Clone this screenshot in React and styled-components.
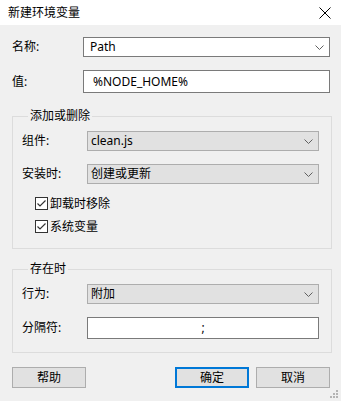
import React from 'react'
import styled, { createGlobalStyle } from 'styled-components';

const GlobalStyle = createGlobalStyle`
  html, body { margin: 0; padding: 0; background: #f0f0f0; }
`;

const Dialog = styled.div`
  width: 341px;
  height: 401px;
  background: #f0f0f0;
  position: relative;
  display: flex;
  flex-direction: column;
  font-family: "Noto Sans", "Noto Sans CJK SC", sans-serif;
  font-size: 12px;
  color: #000;
  overflow: hidden;
`;

const TitleBar = styled.div`
  height: 25px;
  background: #fff;
  display: flex;
  align-items: center;
  justify-content: space-between;
  padding: 0 10px 0 8px;
  box-sizing: border-box;
  line-height: 14px;
`;

const Content = styled.div`
  padding: 12px 0 0 12px;
  display: flex;
  flex-direction: column;
`;

const Row = styled.div`
  display: flex;
  align-items: center;
  height: ${p => p.$h || 20}px;
  margin-top: ${p => p.$mt || 0}px;
  width: ${p => p.$w || 318}px;
`;

const Label = styled.div`
  width: ${p => p.$w}px;
  flex: none;
  line-height: 14px;
`;

const Combo = styled.div`
  flex: 1;
  height: 100%;
  box-sizing: border-box;
  border: 1px solid ${p => (p.$gray ? '#adadad' : '#7a7a7a')};
  background: ${p => (p.$gray ? '#e1e1e1' : '#fff')};
  display: flex;
  align-items: center;
  justify-content: space-between;
  padding: 0 5px 0 ${p => (p.$gray ? 3 : 6)}px;
  line-height: 14px;
`;

const TextBox = styled.div`
  flex: 1;
  height: 100%;
  box-sizing: border-box;
  border: 1px solid #7a7a7a;
  background: #fff;
  display: flex;
  align-items: center;
  justify-content: ${p => (p.$center ? 'center' : 'flex-start')};
  padding-left: ${p => (p.$center ? 0 : 9)}px;
  line-height: 14px;
`;

const Group = styled.fieldset`
  margin: ${p => p.$mt}px 0 0 0;
  width: 320px;
  box-sizing: border-box;
  min-width: 0;
  border: 1px solid #dcdcdc;
  padding: 8px 12px ${p => p.$pb}px 9px;
  display: flex;
  flex-direction: column;
`;

const Legend = styled.legend`
  padding: 0 2px;
  margin-left: 6px;
  line-height: 14px;
`;

const Check = styled.label`
  display: flex;
  align-items: center;
  gap: 2px;
  height: 13px;
  margin: ${p => p.$mt}px 0 0 13px;
  line-height: 14px;
`;

const Buttons = styled.div`
  display: flex;
  margin-top: 14px;
  width: 318px;
`;

const Button = styled.button`
  width: 74px;
  height: 21px;
  box-sizing: border-box;
  margin: 0;
  margin-left: ${p => p.$ml || 0}px;
  padding: 0;
  font-family: inherit;
  font-size: 12px;
  line-height: 14px;
  color: #000;
  background: #e1e1e1;
  border: ${p => (p.$default ? '2px solid #0078d7' : '1px solid #adadad')};
`;

const Grip = styled.svg`
  position: absolute;
  right: 2px;
  bottom: 2px;
`;

const Chevron = () => (
  <svg width="9" height="5" viewBox="0 0 9 5">
    <polyline points="0.5,0.5 4.5,4.5 8.5,0.5" fill="none" stroke="#606060" strokeWidth="1" />
  </svg>
);

const Box = () => (
  <svg width="13" height="13" viewBox="0 0 13 13">
    <rect x="0.5" y="0.5" width="12" height="12" fill="#fff" stroke="#333" />
    <polyline points="2.5,6.5 5,9 10.5,3.5" fill="none" stroke="#333" strokeWidth="1.2" />
  </svg>
);

export default function App() {
  return (
    <Dialog>
      <GlobalStyle />
      <TitleBar>
        <span>新建环境变量</span>
        <svg width="12" height="12" viewBox="0 0 12 12">
          <path d="M0.5 0.5 L11.5 11.5 M11.5 0.5 L0.5 11.5" stroke="#000" strokeWidth="1" />
        </svg>
      </TitleBar>
      <Content>
        <Row $h={20}>
          <Label $w={71}>名称:</Label>
          <Combo>
            <span>Path</span>
            <Chevron />
          </Combo>
        </Row>
        <Row $h={23} $mt={13}>
          <Label $w={71}>值:</Label>
          <TextBox>%NODE_HOME%</TextBox>
        </Row>

        <Group $mt={16} $pb={15}>
          <Legend>添加或删除</Legend>
          <Row $h={20} $w={232 + 65}>
            <Label $w={65}>组件:</Label>
            <Combo $gray>
              <span>clean.js</span>
              <Chevron />
            </Combo>
          </Row>
          <Row $h={20} $mt={13} $w={232 + 65}>
            <Label $w={65}>安装时:</Label>
            <Combo $gray>
              <span>创建或更新</span>
              <Chevron />
            </Combo>
          </Row>
          <Check $mt={13}>
            <Box />
            <span>卸载时移除</span>
          </Check>
          <Check $mt={10}>
            <Box />
            <span>系统变量</span>
          </Check>
        </Group>

        <Group $mt={13} $pb={13}>
          <Legend>存在时</Legend>
          <Row $h={20} $w={232 + 65}>
            <Label $w={65}>行为:</Label>
            <Combo $gray>
              <span>附加</span>
              <Chevron />
            </Combo>
          </Row>
          <Row $h={22} $mt={13} $w={232 + 65}>
            <Label $w={65}>分隔符:</Label>
            <TextBox $center>;</TextBox>
          </Row>
        </Group>

        <Buttons>
          <Button>帮助</Button>
          <Button $default $ml={89}>确定</Button>
          <Button $ml={7}>取消</Button>
        </Buttons>
      </Content>
      <Grip width="9" height="9" viewBox="0 0 9 9">
        <g fill="#b4b4b4">
          <rect x="6" y="0" width="2" height="2" />
          <rect x="3" y="3" width="2" height="2" />
          <rect x="6" y="3" width="2" height="2" />
          <rect x="0" y="6" width="2" height="2" />
          <rect x="3" y="6" width="2" height="2" />
          <rect x="6" y="6" width="2" height="2" />
        </g>
      </Grip>
    </Dialog>
  )
}
